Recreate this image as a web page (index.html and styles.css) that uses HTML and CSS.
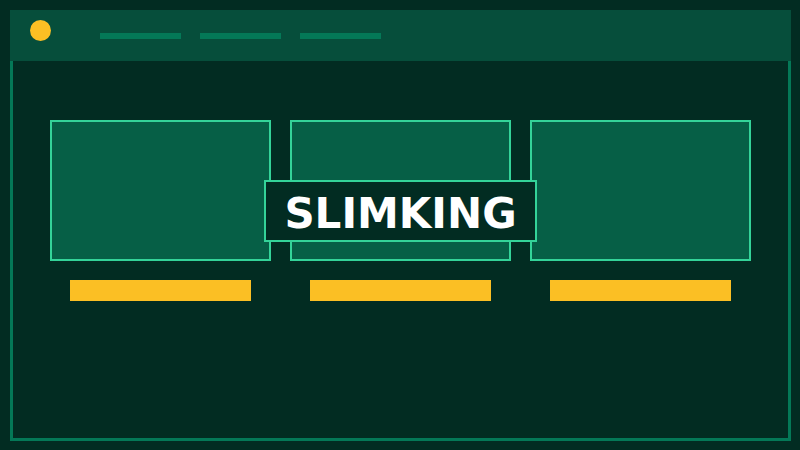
FILE: index.html
```html
<!DOCTYPE html>
<html>
<head>
<meta charset="utf-8">
<link rel="stylesheet" href="styles.css">
</head>
<body>
<div class="frame">
  <div class="header">
    <div class="dot"></div>
    <div class="navline first"></div>
    <div class="navline"></div>
    <div class="navline"></div>
  </div>
  <div class="main">
    <div class="cards">
      <div class="col"><div class="card"></div><div class="bar"></div></div>
      <div class="col"><div class="card"></div><div class="bar"></div></div>
      <div class="col"><div class="card"></div><div class="bar"></div></div>
    </div>
    <div class="title">SLIMKING</div>
  </div>
</div>
</body>
</html>
```
FILE: styles.css
```css
html, body {
  margin: 0;
  padding: 0;
  background: #022c22;
}
body {
  width: 800px;
  height: 450px;
  overflow: hidden;
  font-family: "DejaVu Sans", sans-serif;
}
.frame {
  width: 781px;
  margin: 10px 0 0 10px;
}
.header {
  height: 51px;
  background: #064e3b;
  display: flex;
  align-items: flex-start;
  padding-left: 20px;
  box-sizing: border-box;
}
.dot {
  width: 21px;
  height: 21px;
  border-radius: 50%;
  background: #fbbf24;
  margin-top: 10px;
}
.navline {
  width: 81px;
  height: 6px;
  background: #047857;
  margin-top: 23px;
  margin-left: 19px;
}
.navline.first {
  margin-left: 49px;
}
.main {
  position: relative;
  height: 380px;
  box-sizing: border-box;
  border: 3px solid #047857;
  border-top: 0;
}
.cards {
  display: flex;
  justify-content: center;
  gap: 19px;
  padding-top: 59px;
}
.col {
  display: flex;
  flex-direction: column;
  width: 221px;
}
.card {
  height: 141px;
  box-sizing: border-box;
  border: 2px solid #34d399;
  background: #065f46;
}
.bar {
  width: 181px;
  height: 21px;
  margin: 19px 0 0 20px;
  background: #fbbf24;
}
.title {
  position: absolute;
  left: 251px;
  top: 119px;
  width: 273px;
  height: 62px;
  box-sizing: border-box;
  border: 2px solid #34d399;
  background: #022c22;
  color: #ffffff;
  font-weight: bold;
  font-size: 42px;
  display: flex;
  align-items: center;
  justify-content: center;
  line-height: 1;
  padding-top: 5px;
}
```
